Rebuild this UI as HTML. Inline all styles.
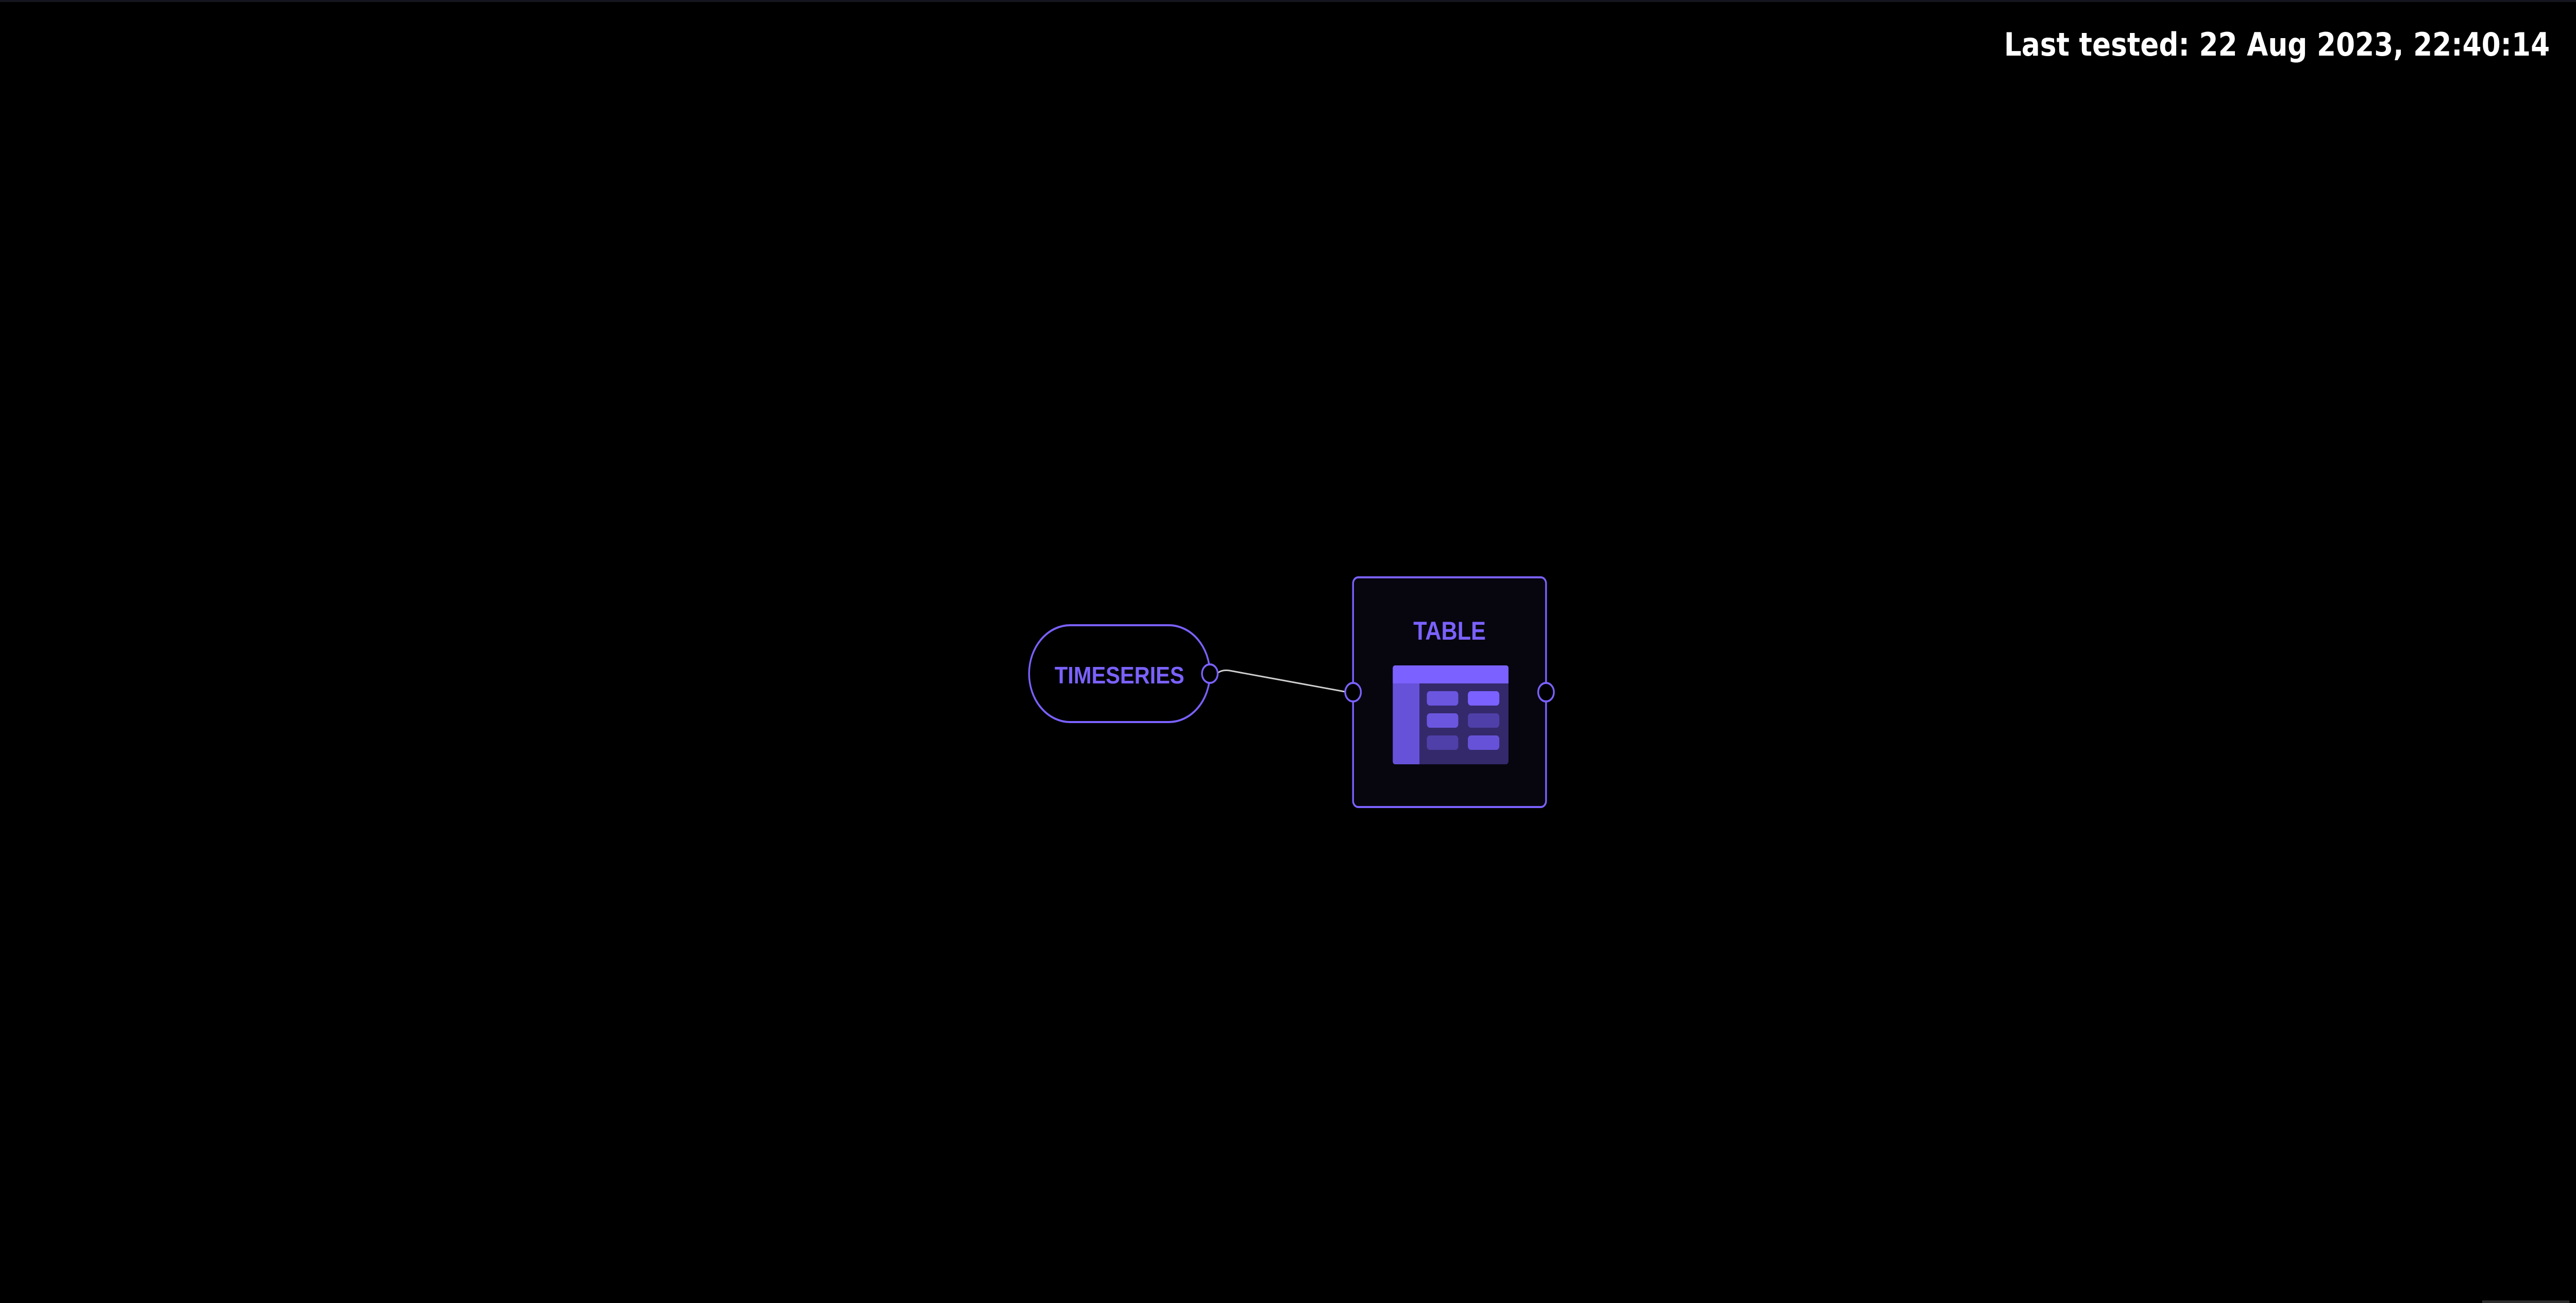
<!DOCTYPE html>
<html><head><meta charset="utf-8"><style>
html,body{margin:0;padding:0;background:#000;width:100%;height:100%;overflow:hidden}
svg{position:absolute;left:0;top:0;width:100vw;height:100vh;display:block}
</style></head><body>
<svg viewBox="0 0 5900 2530" preserveAspectRatio="none">
<rect x="0" y="0" width="5900" height="2530" fill="#000"/>
<rect x="0" y="0" width="5900" height="4" fill="#15151f"/>
<text x="5840" y="108" text-anchor="end" font-family="DejaVu Sans, sans-serif" font-weight="bold" font-size="62" fill="#fff" textLength="1250" lengthAdjust="spacingAndGlyphs">Last tested: 22 Aug 2023, 22:40:14</text>
<path d="M2790 1306 Q2800 1300 2816 1302 L3080 1343" fill="none" stroke="#cfcfcf" stroke-width="3"/>
<rect x="2357" y="1214" width="414" height="188" rx="94" ry="94" fill="#000" stroke="#7b61ff" stroke-width="4"/>
<text x="2564" y="1327" text-anchor="middle" font-family="Liberation Sans, sans-serif" font-weight="bold" font-size="46" fill="#7b61ff" textLength="297" lengthAdjust="spacingAndGlyphs">TIMESERIES</text>
<circle cx="2771" cy="1308" r="18" fill="#000" stroke="#7b61ff" stroke-width="4"/>
<rect x="3099" y="1121" width="442" height="446" rx="12" fill="#07060f" stroke="#7b61ff" stroke-width="4"/>
<text x="3320" y="1242" text-anchor="middle" font-family="Liberation Sans, sans-serif" font-weight="bold" font-size="50" fill="#7b61ff" textLength="166" lengthAdjust="spacingAndGlyphs">TABLE</text>
<rect x="3190" y="1292" width="265" height="192" rx="6" fill="#34296b"/>
<path d="M3196 1292 H3449 Q3455 1292 3455 1298 V1327 H3251 V1484 H3196 Q3190 1484 3190 1478 V1298 Q3190 1292 3196 1292Z" fill="#6652d8"/>
<path d="M3196 1292 H3449 Q3455 1292 3455 1298 V1327 H3190 V1298 Q3190 1292 3196 1292Z" fill="#7b61ff"/>
<rect x="3268" y="1342" width="72" height="28" rx="7" fill="#6b56e0"/>
<rect x="3362" y="1342" width="72" height="28" rx="7" fill="#7b61ff"/>
<rect x="3268" y="1385" width="72" height="28" rx="7" fill="#6b56e0"/>
<rect x="3362" y="1385" width="72" height="28" rx="7" fill="#4f3fa8"/>
<rect x="3268" y="1428" width="72" height="28" rx="7" fill="#4f3fa8"/>
<rect x="3362" y="1428" width="72" height="28" rx="7" fill="#6652d8"/>
<circle cx="3099" cy="1344" r="18" fill="#000" stroke="#7b61ff" stroke-width="4"/>
<circle cx="3541" cy="1344" r="18" fill="#000" stroke="#7b61ff" stroke-width="4"/>
<rect x="5685" y="2525" width="200" height="5" fill="#2c2c2c"/>
</svg>
</body></html>
